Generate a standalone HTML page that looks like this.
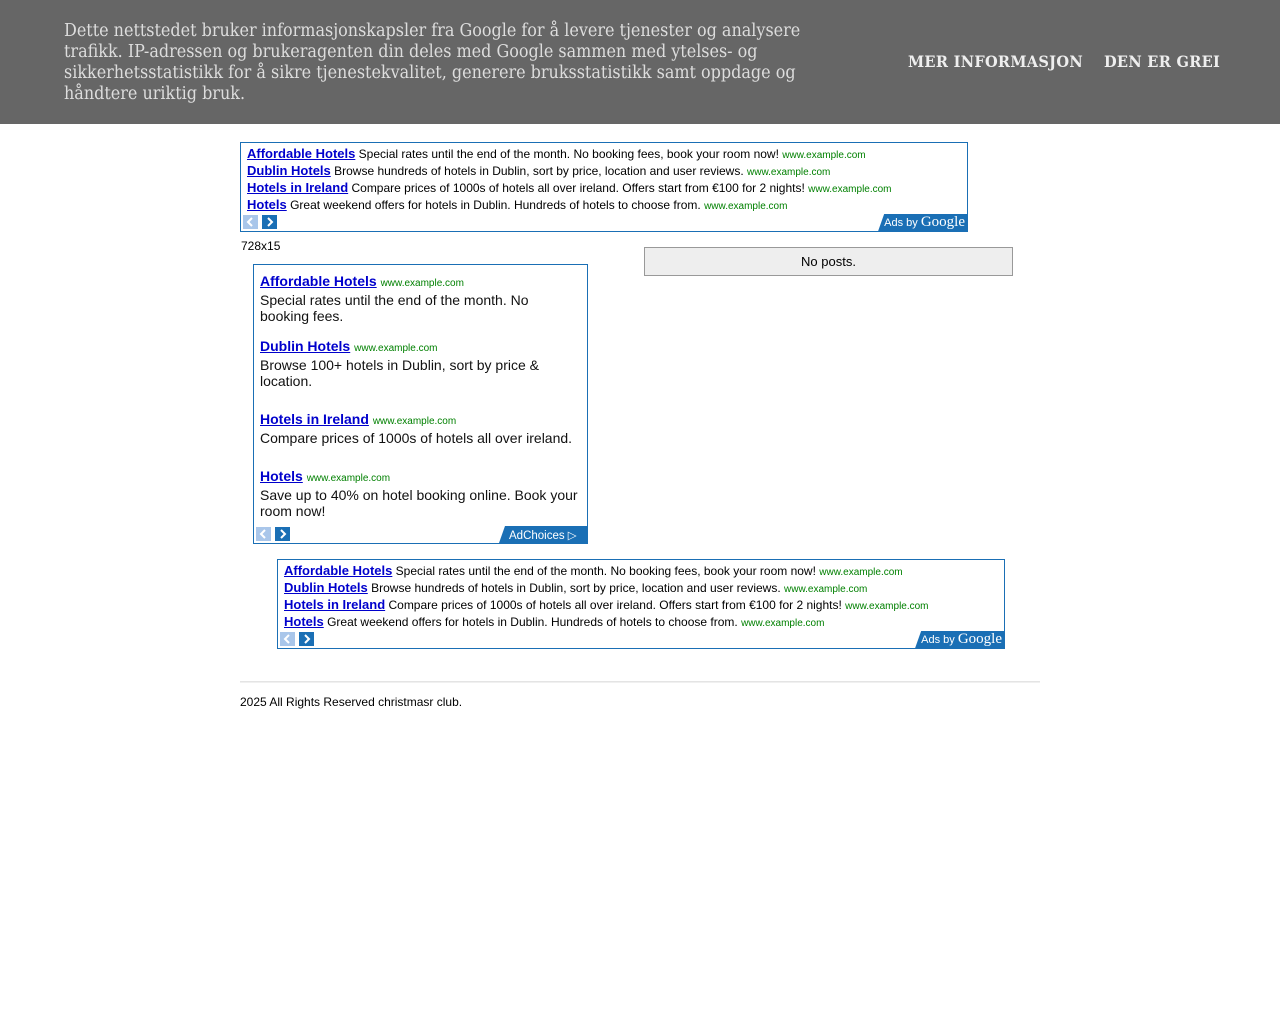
<!DOCTYPE html>
<html><head><meta charset="utf-8"><style>
body{margin:0;background:#fff;font-family:"Liberation Sans",Arial,sans-serif;}
.banner{position:absolute;left:0;top:0;width:1280px;height:124px;background:#666;}
.btxt{position:absolute;left:64px;top:20px;width:760px;font-family:"DejaVu Serif",serif;font-stretch:condensed;font-size:17.8px;line-height:21px;color:#ddd;}
.bbtn{position:absolute;top:52px;font-family:"DejaVu Serif",serif;font-stretch:condensed;font-weight:bold;font-size:16.2px;color:#eee;letter-spacing:0.3px;}
.ad{position:absolute;border:1px solid #1a6fb5;background:#fff;box-sizing:border-box;}
.row{position:absolute;left:6px;white-space:nowrap;font-size:12px;color:#000;}
.row a{color:#0000cc;font-weight:bold;font-size:13px;text-decoration:underline;}
.u{color:#008000;font-size:10px;}
.nav{position:absolute;width:15px;height:14px;}
.nav svg{display:block}
.abg{position:absolute;right:0;bottom:0;height:17px;background:#1a6fb5;color:#fff;font-size:11px;line-height:17px;padding:0 2px 0 6px;clip-path:polygon(6px 0,100% 0,100% 100%,0 100%);}
.abg b{font-family:"Liberation Serif",serif;font-weight:normal;font-size:15px;}
.t2{position:absolute;left:6px;font-size:14px;line-height:16px;width:320px;color:#111;}
.t2 a{color:#0000cc;font-weight:bold;font-size:14px;text-decoration:underline;}
</style></head><body>
<div class="banner">
<div class="btxt">Dette nettstedet bruker informasjonskapsler fra Google for å levere tjenester og analysere trafikk. IP-adressen og brukeragenten din deles med Google sammen med ytelses- og sikkerhetsstatistikk for å sikre tjenestekvalitet, generere bruksstatistikk samt oppdage og håndtere uriktig bruk.</div>
<div class="bbtn" style="left:908px">MER INFORMASJON</div>
<div class="bbtn" style="left:1104px">DEN ER GREI</div>
</div>

<div class="ad" style="left:240px;top:142px;width:728px;height:90px">
<div class="row" style="top:3px"><a>Affordable Hotels</a> Special rates until the end of the month. No booking fees, book your room now! <span class="u">www.example.com</span></div>
<div class="row" style="top:20px"><a>Dublin Hotels</a> Browse hundreds of hotels in Dublin, sort by price, location and user reviews. <span class="u">www.example.com</span></div>
<div class="row" style="top:37px"><a>Hotels in Ireland</a> Compare prices of 1000s of hotels all over ireland. Offers start from €100 for 2 nights! <span class="u">www.example.com</span></div>
<div class="row" style="top:54px"><a>Hotels</a> Great weekend offers for hotels in Dublin. Hundreds of hotels to choose from. <span class="u">www.example.com</span></div>
<div class="nav" style="left:2px;top:72px;background:#a9c6ea"><svg width="15" height="14"><path d="M9 3L5 7L9 11" stroke="#fff" stroke-width="2" fill="none"/></svg></div>
<div class="nav" style="left:21px;top:72px;background:#1a6fb5"><svg width="15" height="14"><path d="M6 3L10 7L6 11" stroke="#fff" stroke-width="2" fill="none"/></svg></div>
<div class="abg">Ads by <b>Google</b></div>
</div>
<div style="position:absolute;left:241px;top:239px;font-size:12px">728x15</div>

<div class="ad" style="left:253px;top:264px;width:335px;height:280px">
<div class="t2" style="top:8px"><a>Affordable Hotels</a> <span class="u">www.example.com</span><br>Special rates until the end of the month. No booking fees.</div>
<div class="t2" style="top:73px"><a>Dublin Hotels</a> <span class="u">www.example.com</span><br>Browse 100+ hotels in Dublin, sort by price &amp; location.</div>
<div class="t2" style="top:146px"><a>Hotels in Ireland</a> <span class="u">www.example.com</span><br>Compare prices of 1000s of hotels all over ireland.</div>
<div class="t2" style="top:203px"><a>Hotels</a> <span class="u">www.example.com</span><br>Save up to 40% on hotel booking online. Book your room now!</div>
<div class="nav" style="left:2px;top:262px;background:#a9c6ea"><svg width="15" height="14"><path d="M9 3L5 7L9 11" stroke="#fff" stroke-width="2" fill="none"/></svg></div>
<div class="nav" style="left:21px;top:262px;background:#1a6fb5"><svg width="15" height="14"><path d="M6 3L10 7L6 11" stroke="#fff" stroke-width="2" fill="none"/></svg></div>
<div class="abg" style="width:76px;padding-left:10px;font-size:11.5px;line-height:20px">AdChoices ▷</div>
</div>

<div style="position:absolute;left:644px;top:247px;width:367px;height:27px;background:#eee;border:1px solid #999;text-align:center;line-height:27px;font-size:13px">No posts.</div>

<div class="ad" style="left:277px;top:559px;width:728px;height:90px">
<div class="row" style="top:3px"><a>Affordable Hotels</a> Special rates until the end of the month. No booking fees, book your room now! <span class="u">www.example.com</span></div>
<div class="row" style="top:20px"><a>Dublin Hotels</a> Browse hundreds of hotels in Dublin, sort by price, location and user reviews. <span class="u">www.example.com</span></div>
<div class="row" style="top:37px"><a>Hotels in Ireland</a> Compare prices of 1000s of hotels all over ireland. Offers start from €100 for 2 nights! <span class="u">www.example.com</span></div>
<div class="row" style="top:54px"><a>Hotels</a> Great weekend offers for hotels in Dublin. Hundreds of hotels to choose from. <span class="u">www.example.com</span></div>
<div class="nav" style="left:2px;top:72px;background:#a9c6ea"><svg width="15" height="14"><path d="M9 3L5 7L9 11" stroke="#fff" stroke-width="2" fill="none"/></svg></div>
<div class="nav" style="left:21px;top:72px;background:#1a6fb5"><svg width="15" height="14"><path d="M6 3L10 7L6 11" stroke="#fff" stroke-width="2" fill="none"/></svg></div>
<div class="abg">Ads by <b>Google</b></div>
</div>

<div style="position:absolute;left:240px;top:681px;width:800px;height:0;border-top:1px solid #e4e4e4;border-bottom:1px solid #f0f0f0"></div>
<div style="position:absolute;left:240px;top:695px;font-size:12px">2025 All Rights Reserved christmasr club.</div>
</body></html>
